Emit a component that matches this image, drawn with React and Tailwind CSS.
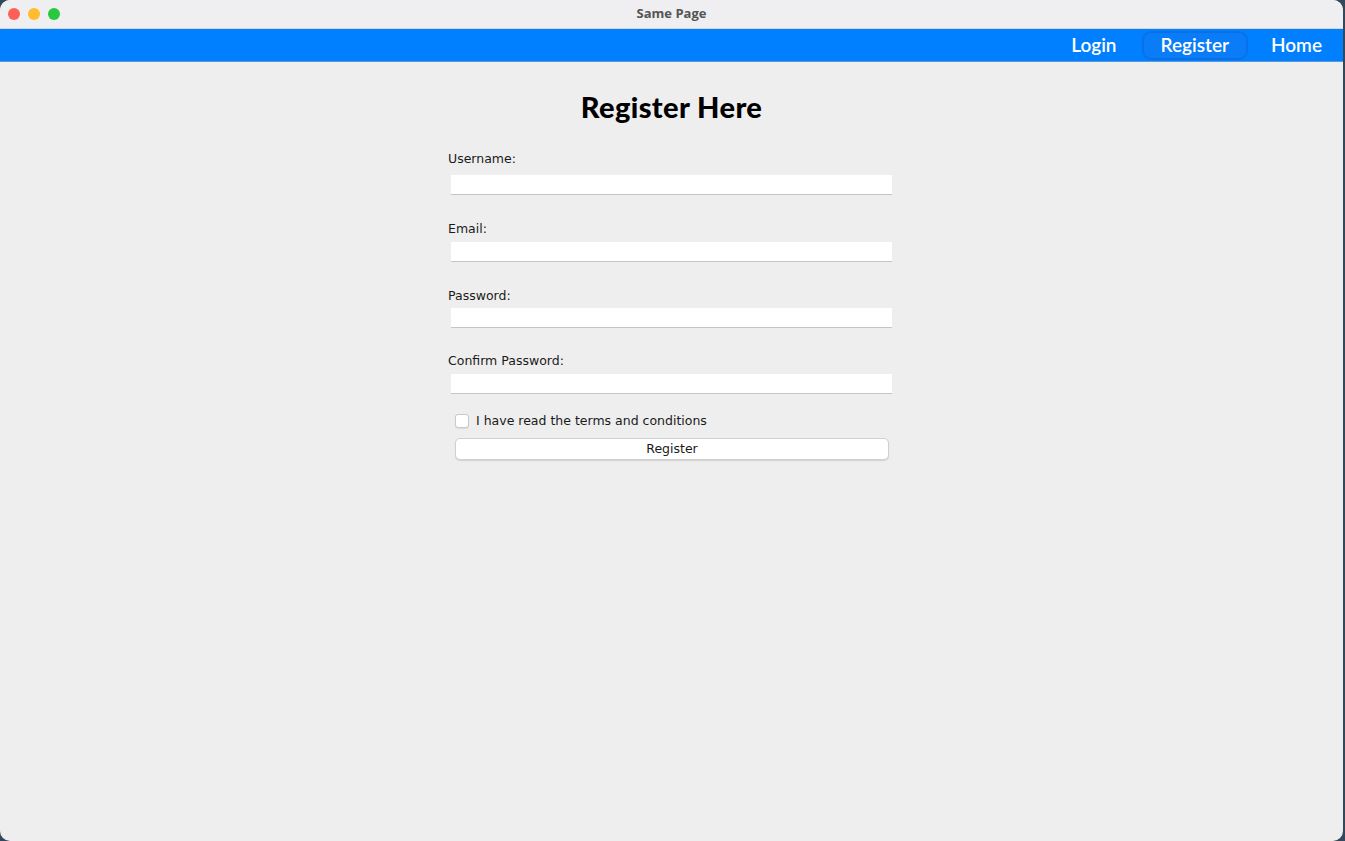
import React, { useState } from "react";

const fields = [
	{ label: "Username:", type: "text", gap: "mt-[26px]", inputGap: "mt-[8px]" },
	{ label: "Email:", type: "email", gap: "mt-[26px]", inputGap: "mt-[5px]" },
	{ label: "Password:", type: "password", gap: "mt-[26px]", inputGap: "mt-[4px]" },
	{ label: "Confirm Password:", type: "password", gap: "mt-[25px]", inputGap: "mt-[5px]" },
];

export default function App() {
	const [agreed, setAgreed] = useState(false);

	return (
		<div className="h-[841px] w-[1345px] bg-[#33485a] overflow-hidden">
			<div className="h-[841px] w-[1343px] rounded-[10px] bg-[#eeeeee] overflow-hidden flex flex-col">
				{/* title bar */}
				<div className="relative h-[29px] shrink-0 bg-[#efeef1] border-b border-[#d6d5d8] flex items-center justify-center">
					<div className="absolute left-[8px] top-[8px] flex gap-[8px]">
						<span className="w-[12px] h-[12px] rounded-full bg-[#fe5f57]"></span>
						<span className="w-[12px] h-[12px] rounded-full bg-[#febc2e]"></span>
						<span className="w-[12px] h-[12px] rounded-full bg-[#28c840]"></span>
					</div>
					<span className="text-[13px] font-bold text-[#555555]" style={{ fontFamily: '"Open Sans", "Liberation Sans", sans-serif' }}>Same Page</span>
				</div>

				{/* nav */}
				<div className="h-[33px] shrink-0 bg-[#0080ff] border-b border-[#5d97d6] flex items-center justify-end pr-[9px]" style={{ fontFamily: 'Lato, "Open Sans", sans-serif' }}>
					<button className="h-[28px] px-[12px] pb-[2px] mr-[13px] text-white text-[19px] leading-none font-semibold">Login</button>
					<button className="h-[29px] px-[17px] pb-[1px] flex items-center rounded-[9px] bg-[#0a7cf8] border-2 border-[#0672ea] text-white text-[19px] leading-none font-semibold">Register</button>
					<button className="h-[28px] px-[12px] pb-[2px] ml-[11px] text-white text-[19px] leading-none font-semibold">Home</button>
				</div>

				{/* form */}
				<div className="flex flex-col items-center">
					<h1 className="mt-[27px] text-[29px] leading-[36px] font-black text-black tracking-[0.4px]" style={{ fontFamily: 'Lato, "Open Sans", sans-serif' }}>Register Here</h1>
					<div className="w-[447px]" style={{ fontFamily: '"DejaVu Sans", "Liberation Sans", sans-serif' }}>
						{fields.map((f) => (
							<div key={f.label} className={f.gap}>
								<label className="block text-[12.5px] leading-[16px] text-[#1a1a1a]">{f.label}</label>
								<input type={f.type} className={`block w-[441px] ml-[3px] h-[20px] bg-white border-b border-[#c4c4c4] outline-none text-[13px] px-1 ${f.inputGap}`} />
							</div>
						))}
						<label className="flex items-center h-[16px] mt-[19px] ml-[7px] gap-[7px] text-[12.5px] text-[#1a1a1a]">
							<input type="checkbox" checked={agreed} onChange={() => setAgreed(!agreed)} className="w-[14px] h-[14px] rounded-[3px] appearance-none bg-white border border-[#c9c9c9] shadow-[0_1px_1px_rgba(0,0,0,0.08)] checked:bg-[#0a7cf8]" />
							I have read the terms and conditions
						</label>
						<button className="block w-[434px] h-[22px] ml-[7px] mt-[9px] rounded-[5px] bg-white border border-[#d0d0d0] shadow-[0_1px_1px_rgba(0,0,0,0.12)] text-[12.5px] text-[#1a1a1a]">Register</button>
					</div>
				</div>
			</div>
		</div>
	);
}
